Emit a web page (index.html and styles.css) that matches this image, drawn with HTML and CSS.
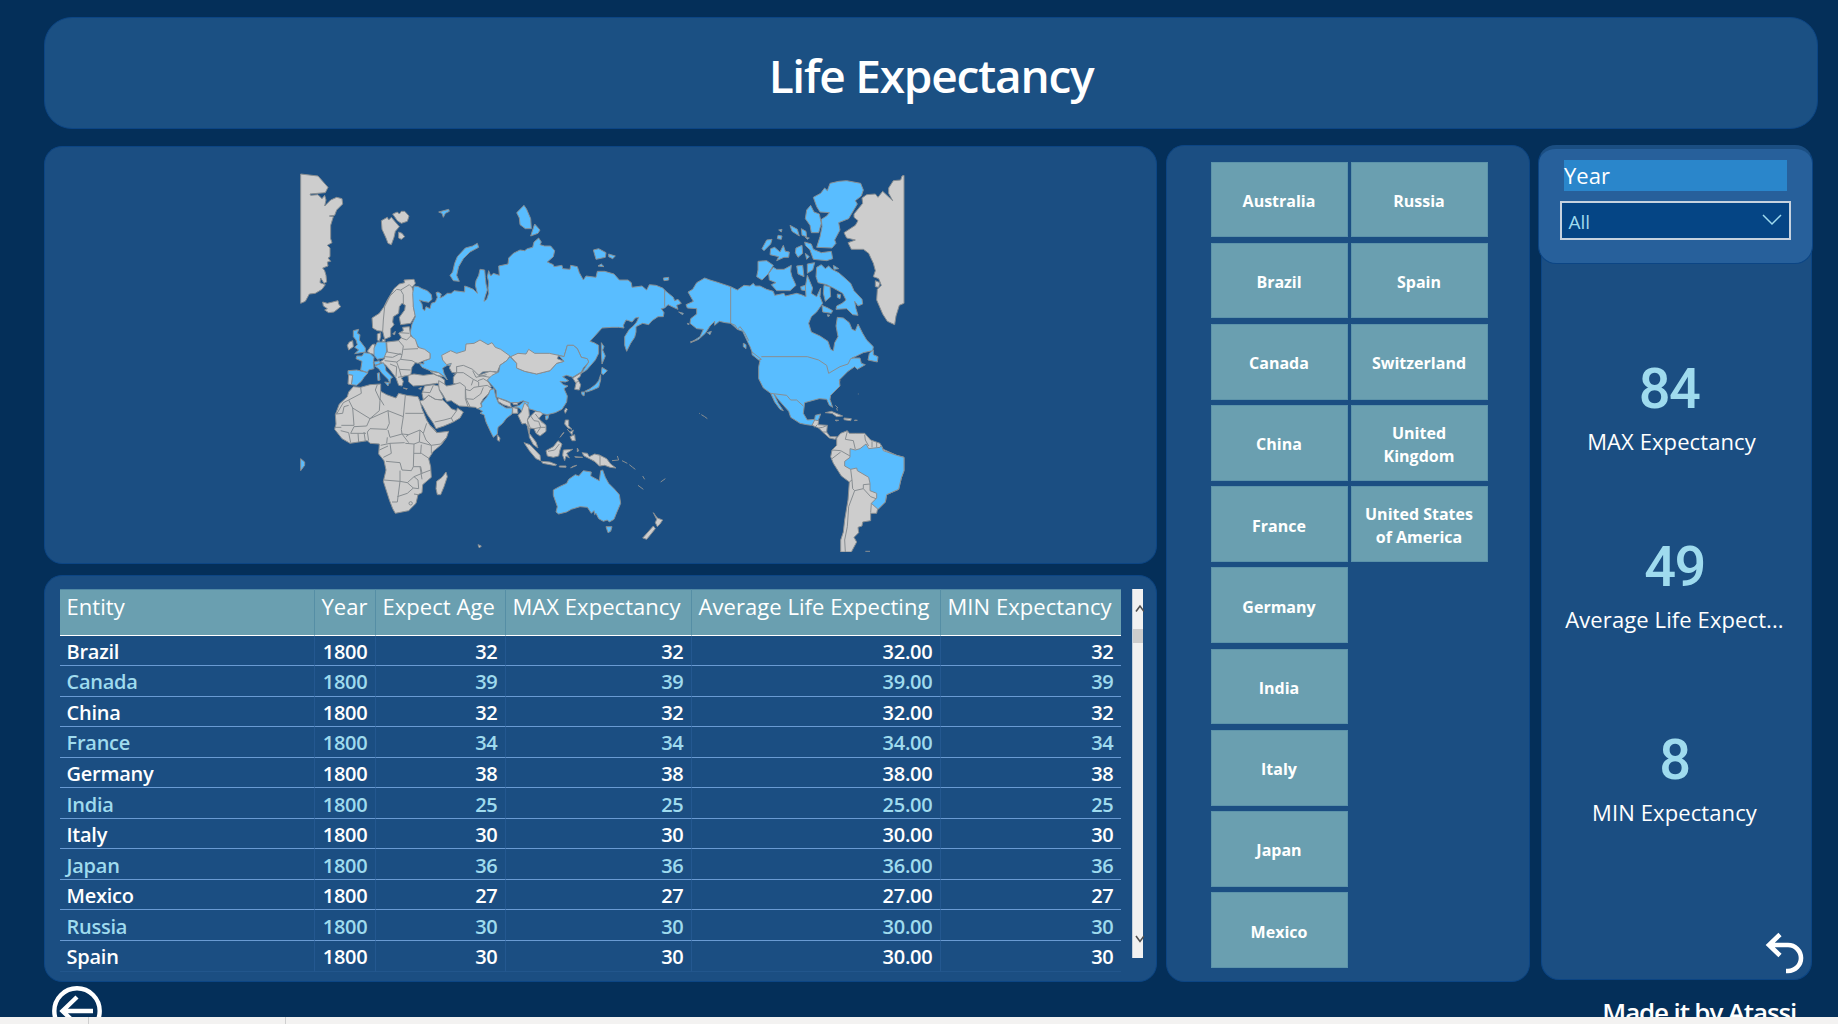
FILE: index.html
```html
<!DOCTYPE html>
<html lang="en">
<head>
<meta charset="utf-8">
<title>Life Expectancy</title>
<link rel="stylesheet" href="styles.css">
</head>
<body>
<div class="dashboard">
  <header class="panel title-panel"><h1>Life Expectancy</h1></header>
  <main class="content">
    <div class="left">
      <section class="panel map-panel">
        <svg class="map" viewBox="0 0 1920 1176" width="640" height="392">
          <!-- Northern Eurasia, Greenland (east) and Scandinavia -->
          <g>
            <path d="M32,42L84,48 114,82 106,98 60,102 62,106 84,104 96,116 104,106 108,120 104,138 122,120 140,112 156,116 158,132 140,150 134,166 118,168 130,170 122,196 122,236 126,248 112,256 120,264 120,290 114,294 122,304 112,306 114,318 98,324 104,332 108,346 110,366 102,370 92,354 90,368 106,374 96,388 76,400 58,402 46,424 32,430Z"/>
            <path d="M98,426L112,430 128,426 144,422 146,432 152,440 132,456 116,458 104,450 112,446 100,438Z"/>
            <path d="M274,182L292,172 296,180 304,172 328,200 316,214 312,232 304,254 294,250 288,234 276,208ZM308,162L322,156 328,162 334,154 344,154 357,168 352,184 334,190 322,182ZM326,216L336,220 344,230 334,238 326,234Z"/>
            <path d="M246,474L268,460 282,440 292,420 312,386 328,372 344,368 342,360 372,358 376,370 366,382 372,400 370,440 376,466 362,490 332,494 328,472 344,450 346,436 336,430 328,440 326,460 310,470 308,486 312,494 302,506 302,530 284,538 278,514 262,512 248,504Z"/>
            <path class="line" d="M278,514L280,480 284,440 300,408 320,388 332,390 358,374 366,382M332,390L340,404 340,432"/>
            <path d="M178,546L188,542 190,560 176,570 172,556ZM262,522L272,518 272,530 268,544 262,540ZM278,538L286,540 282,546 276,544ZM308,522L316,514 314,524Z"/>
            <path class="hit" d="M372,378L385,380 396,386 412,392 424,404 426,418 416,427 400,424 388,420 396,432 398,447 404,452 408,440 420,446 424,430 436,426 442,412 438,398 444,396 454,402 450,414 462,408 472,400 484,400 492,392 508,394 524,396 524,378 536,382 550,388 562,400 556,376 558,362 566,346 570,328 584,330 586,352 588,372 592,390 586,408 582,424 590,418 596,400 594,384 596,366 592,350 596,332 602,348 610,340 628,346 626,318 654,312 656,294 670,280 690,270 704,272 712,266 728,262 732,246 746,234 754,246 750,254 764,258 782,258 794,272 790,290 772,306 790,314 792,320 816,316 818,326 840,328 842,316 862,320 868,338 880,360 888,348 918,352 922,334 944,334 972,342 988,360 1014,360 1024,368 1026,382 1056,378 1070,390 1078,374 1098,376 1118,384 1128,394 1150,412 1154,422 1164,418 1174,430 1160,436 1164,448 1150,442 1134,434 1124,444 1114,446 1122,458 1120,470 1104,470 1086,482 1076,494 1058,490 1038,500 1038,516 1034,532 1022,550 1010,574 1004,556 1004,530 1018,508 1030,498 1040,486 1046,472 1036,474 1026,486 1016,482 1008,480 1000,496 1002,504 986,502 966,502 936,504 920,522 900,544 912,548 926,556 926,580 916,600 890,630 874,640 896,606 890,596 874,592 862,566 850,556 832,556 822,590 806,586 734,590 662,590 600,600 520,620 472,616 458,624 462,640 472,660 456,644 440,636 420,632 396,622 388,610 402,612 400,604 420,596 420,580 390,568 372,540 360,520 366,492 376,470 370,440 368,400Z"/>
            <path class="hit" d="M446,156L476,148 478,154 466,160 460,172 456,160ZM702,136L710,148 722,176 724,206 706,206 690,194 688,174 680,158ZM734,192L750,210 744,220 722,228ZM480,346L488,336 494,310 502,290 526,264 548,258 562,250 566,262 540,276 520,296 506,320 500,346 508,364 490,362ZM910,270L926,266 948,278 946,292 918,298ZM924,318L934,312 942,320ZM956,282L976,288 968,296 956,290ZM1120,354L1136,352 1136,360 1122,362ZM1166,456L1180,460 1178,464Z"/>
            <path class="hit" d="M190,512L206,508 202,520 210,524 208,540 226,564 226,576 194,581 206,570 194,562 202,554 198,540 190,530Z"/>
            <path d="M290,546L326,542 334,532 326,520 340,512 338,502 358,500 362,528 376,538 384,562 404,568 420,580 420,596 402,602 384,610 376,608 366,622 362,646 344,648 334,654 340,664 336,678 326,676 318,654 300,630 286,614 270,606 284,596 282,580 292,576Z"/>
            <path class="line" d="M328,518L358,520M334,534L350,540 362,528M326,542L340,558 336,584 292,576M340,568L384,566M336,584L332,598 366,602 376,608M284,590L308,592 332,580M284,602L320,606 332,598M320,606L328,628 362,630M300,612L320,620 318,650M328,628L334,650M344,648L324,652"/>
          </g>
          <!-- Africa, Middle East, South and East Asia -->
          <g transform="translate(0 540)">
            <path class="hit" d="M32,356L44,366 44,376 32,392Z"/>
            <path class="hit" d="M174,92L200,90 234,98 222,112 214,124 200,136 184,134 188,106 174,104ZM200,48L216,48 222,38 240,40 252,52 250,68 252,86 236,90 232,98 212,90 216,64 198,56Z"/>
            <path d="M176,104L188,106 184,134 174,132ZM232,34L246,14 254,12 254,44 240,40Z"/>
            <path class="hit" d="M262,6L288,6 290,34 282,54 262,58 252,46 252,24ZM252,66L268,62 272,70 256,76ZM254,78L280,68 286,80 288,92 308,112 302,116 300,130 294,118 276,100 266,86ZM262,100L268,98 270,120 264,122ZM284,126L298,128 294,138Z"/>
            <path d="M354,106L372,102 400,106 430,102 450,110 464,120 464,132 440,130 400,136 370,138 356,126ZM420,94L446,98 462,110 440,106ZM386,146L394,142 392,148ZM340,144L352,146 350,148Z"/>
            <path d="M455,46L482,32 500,40 526,32 528,12 552,10 570,0 594,14 606,8 616,22 632,28 660,48 650,62 630,76 622,96 600,94 578,96 566,106 548,92 520,80 500,80 500,98 486,98 478,84 484,70 470,74 458,60Z"/>
            <path d="M500,80L520,76 548,88 566,106 600,94 624,98 606,112 594,124 604,140 592,146 570,150 540,160 520,140 490,130 490,112 500,98Z"/>
            <path class="line" d="M500,98L520,98 550,118 544,136M548,92L558,112 590,104M566,106L600,112M564,122L580,116 596,126M500,98L490,104M550,118L566,126 566,144"/>
            <path d="M446,122L460,130 470,138 490,134 510,128 526,140 528,176 540,200 508,198 492,188 484,182 470,184 456,160 446,146ZM526,148L540,152 552,142 592,136 606,146 596,160 580,176 572,190 576,204 562,206 556,202 534,200 526,176Z"/>
            <path class="line" d="M528,176L550,178 572,162 580,142"/>
            <path d="M404,138L430,134 446,138 448,150 460,172 456,180 436,178 416,166 400,180 396,160ZM400,180L416,166 436,178 458,180 472,192 484,206 500,212 502,204 520,216 510,234 490,246 462,258 438,266 430,250 412,224 398,198 388,184Z"/>
            <path class="line" d="M396,156L420,158 430,136M434,246L462,240 484,234 500,212M484,234L490,246"/>
            <path class="hit" d="M660,50L650,62 630,76 626,96 606,106 592,120 604,134 618,150 620,172 650,182 662,188 684,188 700,182 712,190 716,206 736,212 752,220 772,224 796,218 816,208 830,186 832,168 822,146 834,138 820,134 810,124 826,126 836,122 818,110 830,106 848,112 874,96 880,84 896,66 892,56 874,52 862,26 850,16 832,16 822,50 806,46 822,64 800,70 780,92 740,102 704,94 680,84 680,70ZM766,228L776,226 774,236 768,240Z"/>
            <path d="M662,50L684,40 708,42 716,28 734,40 778,40 806,46 802,56 822,64 800,70 780,92 740,102 704,94 680,84 680,70Z"/>
            <path class="hit" d="M600,150L612,146 618,172 626,190 648,204 664,204 688,196 702,184 716,188 706,206 696,214 688,204 668,202 666,222 650,234 638,250 624,262 622,282 610,292 600,272 588,246 582,224 570,220 578,214 564,206 576,200 574,190 588,174 596,162Z"/>
            <path d="M624,174L660,188 664,202 640,194 624,184ZM668,188L684,188 682,194 670,194ZM668,202L682,206 684,220 668,220ZM704,188L716,202 718,226 712,240 720,262 716,280 712,258 706,250 696,252 684,226 694,216ZM712,240L722,228 736,214 752,216 758,222 746,236 768,256 768,274 750,288 738,280 732,266 720,264 718,280 738,306 744,324 730,314 718,292 716,268ZM622,284L630,294 628,304 622,300Z"/>
            <path class="line" d="M722,228L732,242 746,244 752,262 732,266M736,222L758,250M740,280L752,262 766,262"/>
            <path d="M702,308L720,314 750,346 752,362 738,356 718,332ZM754,364L780,366 800,374 796,377 758,370ZM808,378L828,378 828,382 808,381ZM842,384L860,376 846,380ZM768,332L790,320 804,302 816,312 810,330 806,348 790,352 772,348ZM820,330L848,328 830,340 838,354 828,348 824,362 818,346ZM862,324L866,332 862,336ZM854,350L878,352 858,352ZM826,240L836,240 836,258 846,268 834,264 824,252ZM840,290L854,284 856,302 846,302ZM810,292L820,278 822,278ZM832,268L840,276 850,270 846,284ZM828,204L832,208 826,220 823,212Z"/>
            <path d="M898,352L912,344 930,346 930,376 916,366 904,358Z"/>
            <path class="line" d="M774,334L794,330 808,312"/>
            <path d="M848,114L874,98 870,110 862,116 872,134 868,150 854,148 858,130Z"/>
            <path class="line" d="M856,128L866,124"/>
            <path class="hit" d="M936,82L952,92 940,104 934,100ZM932,104L932,120 926,142 908,150 890,156 884,154 900,146 916,134 926,122ZM874,156L884,156 882,168 876,164Z"/>
            <path d="M190,140L212,142 240,134 272,132 272,154 290,164 318,174 326,160 350,166 384,170 390,184 396,206 410,240 420,256 436,270 440,278 476,274 470,292 454,314 430,334 416,356 422,380 424,412 398,434 396,458 384,464 378,490 356,512 316,520 308,506 298,480 280,424 288,390 282,362 266,342 268,312 240,310 232,302 180,310 156,296 134,268 138,252 136,224 148,192 172,170 176,156Z"/>
            <path class="line" d="M212,142L214,160 176,180 160,188 140,222M176,180L188,204 240,236 268,212 270,180 256,150 262,134M188,204L192,256 154,256M138,222L158,220 162,200 176,196M240,236L294,212 340,230 346,166M270,176L282,196M272,154L270,180M346,220L400,220M240,236L230,258 192,260 182,280M294,212L298,250 290,268 240,266 232,276 236,302M340,230L334,268 336,282 300,292 294,270M336,282L356,284 390,270 400,280 410,250M336,282L356,308M356,284L348,290M344,308L300,310 272,316M390,270L388,306 372,312 346,310M388,306L424,316 452,312 470,292M400,280L408,300 424,316 424,340M300,310L304,340 280,352M372,312L370,380 364,392 336,390 330,368 288,364M372,340L394,340 418,356M394,314L392,340M370,380L392,380 396,400 422,390M390,380L396,418M282,420L330,424 330,392M330,424L322,486 306,486M330,424L352,428 372,410 396,400M322,470L352,460 370,444 386,446 384,420 372,410M352,428L370,444M384,464L372,462M152,272L176,278 182,308M204,280L206,306M222,276L226,304M182,280L228,280M134,262L154,262M292,292L290,310M440,278L420,256M268,330L294,318"/>
            <circle class="line" cx="362" cy="490" r="5"/>
            <path d="M440,424L456,412 468,396 472,410 462,440 452,464 442,464 438,446ZM564,614L574,618 568,624Z"/>
          </g>
          <!-- North America and Greenland (west) -->
          <g transform="translate(930 0)">
            <path class="hit" d="M314,354L330,360 350,366 392,380 412,390 432,376 450,378 460,370 466,378 480,378 500,388 520,394 524,406 552,400 556,408 590,400 604,404 618,410 616,380 622,346 632,370 638,384 634,400 650,410 662,384 660,410 668,430 650,456 634,470 626,490 634,516 660,528 684,544 692,568 700,572 704,548 714,530 708,498 712,472 730,474 748,488 756,508 766,512 774,492 788,520 800,540 820,560 818,572 790,578 770,588 756,594 780,594 784,610 796,614 772,628 764,620 744,634 730,648 718,660 720,678 692,706 690,718 698,742 688,736 680,718 658,716 636,722 614,728 610,760 622,780 644,778 646,766 662,762 656,778 644,790 634,796 620,794 600,790 572,772 566,754 550,736 536,720 522,702 534,728 550,752 540,748 524,726 512,700 490,684 476,656 476,620 480,602 468,592 456,576 450,560 444,548 428,514 412,508 392,490 376,488 358,484 344,496 344,484 330,498 316,520 296,538 272,548 300,530 310,508 290,506 270,490 272,476 290,462 290,446 262,444 258,434 280,424 264,396 278,388 290,368Z"/>
            <path class="line" d="M194,390V440M392,380V490L406,496 412,508 420,500 434,518 446,542M484,590H622L656,600 680,616 686,640 720,620 744,612 752,596 764,592M512,700L560,706 572,720 590,720 610,738M718,670L720,660"/>
            <path class="hit" d="M804,600L808,580 820,570 820,584 834,590 832,606ZM430,550L438,554 438,566 430,560ZM456,576L484,598 476,600 456,584ZM262,490L268,492 264,494ZM322,518L334,514 330,524Z"/>
            <path class="hit" d="M640,112L662,100 674,84 682,92 690,70 716,64 740,62 782,70 790,90 784,108 766,122 772,132 746,176 716,188 720,210 704,240 708,250 696,264 650,262 660,230 666,200 664,178 680,168 688,158 660,156 650,140ZM632,136L642,156 658,162 664,190 656,218 634,218 630,196 616,176 620,150ZM614,246L634,252 640,268 664,278 694,274 698,296 680,302 640,298 630,270 616,256ZM486,266L500,240 516,238 512,252 492,272ZM512,266L524,262 540,276 550,256 556,274 568,276 566,292 552,292 530,302 536,290 510,284ZM570,196L592,208 598,228 576,214ZM604,206L618,214 620,230 606,226ZM588,264L606,256 608,280 594,292 586,278ZM534,226L546,228 544,238 532,236ZM536,210L546,208 544,216ZM616,280L628,290 620,298ZM616,232L628,234 622,238Z"/>
            <path class="hit" d="M474,304L500,302 520,316 506,340 486,360 470,350 474,330ZM506,340L520,322 530,328 552,328 574,316 572,334 576,350 588,376 570,392 530,392 514,374 528,368 508,360ZM590,318L608,316 612,350 594,342ZM622,312L644,308 638,330 622,340ZM602,380L616,376 616,392 604,390ZM650,322L664,314 676,326 686,318 696,328 716,338 732,352 752,370 762,392 786,418 788,432 774,438 764,424 768,446 774,466 758,464 740,446 708,448 710,438 726,430 738,420 728,400 700,384 680,374 654,368 648,350ZM700,316L716,326 702,328ZM666,436L684,444 698,452 694,460 668,456ZM672,376L690,380 692,410 676,424 670,400ZM712,402L722,404 720,416 712,412ZM682,464L690,466 684,470Z"/>
            <path d="M912,46L906,48 902,60 880,62 866,84 866,100 878,122 848,94 834,112 826,102 800,104 786,114 788,130 762,162 762,172 774,182 766,196 732,218 740,234 766,240 744,248 754,268 790,268 806,280 820,310 826,332 820,350 836,356 844,376 832,388 830,420 848,462 862,484 884,494 888,468 898,436 912,430ZM826,362L840,368 836,382 826,380Z"/>
          </g>
          <!-- Oceania and the southern Americas -->
          <g transform="translate(630 540)">
            <path class="hit" d="M304,8L312,20 308,30 316,48 306,72 304,40Z"/>
            <path d="M246,338L262,340 268,350 284,342 300,346 320,356 332,372 348,384 330,382 314,376 298,378 284,364 268,356 252,348Z"/>
            <path class="line" d="M300,346V376M336,362L356,360 352,348M366,362L382,370M388,374L398,382 406,388M428,408L434,418M414,436L430,448M482,426L496,416M598,220L600,221M604,224L614,230 622,236M570,6L586,1M1006,196L1014,204M1010,204L1012,212M1075,161V163M1096,634H1110"/>
            <path class="hit" d="M160,450L178,440 200,430 206,418 226,404 236,408 250,392 274,396 272,408 298,422 302,392 308,390 316,412 326,430 344,448 358,464 362,490 350,518 342,538 328,546 322,540 310,544 296,536 288,520 284,524 282,512 274,520 262,502 240,500 214,508 200,516 176,522 168,516 172,500 160,466ZM318,560L336,560 332,574 324,578Z"/>
            <path d="M460,518L472,534 488,540 480,552 472,560 466,548 470,538ZM460,558L466,566 450,586 440,598 428,594 444,576Z"/>
            <path d="M936,256L944,240 956,242 954,254 982,256 980,276 990,290 1010,290 1006,298 988,294 968,276 956,264ZM976,218L994,214 1028,228 1010,230 996,220ZM1032,234L1054,236 1052,242 1032,239ZM1006,240L1016,241 1008,243ZM1064,240L1072,241 1064,242Z"/>
            <path class="line" d="M952,254L944,262M956,264L968,262 982,256M968,276L980,276"/>
            <path d="M1010,294L1022,280 1042,272 1048,280 1066,280 1094,280 1112,300 1140,310 1150,328 1190,346 1212,352 1212,392 1204,414 1196,448 1160,464 1156,486 1132,510 1130,520 1112,520 1112,542 1088,546 1086,558 1074,562 1076,578 1062,592 1070,606 1054,636H1022V600L1030,576 1034,540 1044,480 1048,426 1024,408 1000,370 992,350 996,330 1010,316Z"/>
            <path class="hit" d="M1050,326L1066,330 1080,326 1098,312 1106,326 1140,322 1144,316 1150,332 1190,346 1212,352 1212,392 1204,414 1196,448 1160,464 1156,486 1134,508 1114,490 1130,474 1130,460 1110,452 1110,430 1106,412 1072,392 1070,384 1052,388 1034,378 1034,364 1050,352Z"/>
            <path class="line" d="M1042,274L1036,298 1060,302 1066,328M1094,284L1096,300 1106,318M1116,304V322M1130,306V322M996,330L1022,332 1050,348M1022,336L996,356M1052,388L1056,420 1058,446 1064,452 1046,500 1042,560 1034,600 1036,636M1048,426L1056,420M1064,452L1090,446 1090,434 1110,432M1090,446L1112,470 1128,476M1114,490L1112,518"/>
          </g>
        </svg>
      </section>
      <section class="panel table-panel">
        <table class="data">
          <colgroup><col class="c-entity"><col class="c-year"><col class="c-age"><col class="c-max"><col class="c-avg"><col class="c-min"></colgroup>
          <thead><tr><th>Entity</th><th>Year</th><th>Expect Age</th><th>MAX Expectancy</th><th>Average Life Expecting</th><th>MIN Expectancy</th></tr></thead>
          <tbody>
            <tr><td>Brazil</td><td>1800</td><td>32</td><td>32</td><td>32.00</td><td>32</td></tr>
            <tr><td>Canada</td><td>1800</td><td>39</td><td>39</td><td>39.00</td><td>39</td></tr>
            <tr><td>China</td><td>1800</td><td>32</td><td>32</td><td>32.00</td><td>32</td></tr>
            <tr><td>France</td><td>1800</td><td>34</td><td>34</td><td>34.00</td><td>34</td></tr>
            <tr><td>Germany</td><td>1800</td><td>38</td><td>38</td><td>38.00</td><td>38</td></tr>
            <tr><td>India</td><td>1800</td><td>25</td><td>25</td><td>25.00</td><td>25</td></tr>
            <tr><td>Italy</td><td>1800</td><td>30</td><td>30</td><td>30.00</td><td>30</td></tr>
            <tr><td>Japan</td><td>1800</td><td>36</td><td>36</td><td>36.00</td><td>36</td></tr>
            <tr><td>Mexico</td><td>1800</td><td>27</td><td>27</td><td>27.00</td><td>27</td></tr>
            <tr><td>Russia</td><td>1800</td><td>30</td><td>30</td><td>30.00</td><td>30</td></tr>
            <tr><td>Spain</td><td>1800</td><td>30</td><td>30</td><td>30.00</td><td>30</td></tr>
          </tbody>
        </table>
        <div class="scrollbar">
          <svg width="11" height="40" viewBox="0 0 11 40"><path d="M3 22.5L7 17L11 22.5"/></svg>
          <div class="thumb"></div>
          <svg class="down" width="11" height="40" viewBox="0 0 11 40"><path d="M3 18L7 23.5L11 18"/></svg>
        </div>
      </section>
    </div>
    <section class="panel slicer-panel">
      <div class="tiles">
        <button>Australia</button><button>Brazil</button><button>Canada</button><button>China</button><button>France</button><button>Germany</button><button>India</button><button>Italy</button><button>Japan</button><button>Mexico</button>
        <button>Russia</button><button>Spain</button><button>Switzerland</button><button>United<br>Kingdom</button><button>United States<br>of America</button>
      </div>
    </section>
    <aside class="side">
      <div class="panel year-panel">
        <div class="year-label">Year</div>
        <div class="select"><span>All</span><svg width="20" height="12" viewBox="0 0 20 12"><path d="M1 1L10 10L19 1"/></svg></div>
      </div>
      <div class="panel kpi-panel">
        <div class="kpi kpi-max"><div class="value">84</div><div class="label">MAX Expectancy</div></div>
        <div class="kpi kpi-avg"><div class="value">49</div><div class="label">Average Life Expect...</div></div>
        <div class="kpi kpi-min"><div class="value">8</div><div class="label">MIN Expectancy</div></div>
        <svg class="undo" width="40" height="44" viewBox="0 0 40 44"><path d="M15 2.5L4 13L15 23.5M4.5 13H23A13 13 0 0 1 23 39H21"/></svg>
      </div>
    </aside>
  </main>
  <footer class="foot">
    <svg width="50" height="50" viewBox="0 0 50 50"><circle cx="25" cy="25" r="22.7"/><path d="M25 11L10.5 25L25 39M11 25H41"/></svg>
    <span>Made it by Atassi</span>
  </footer>
</div>
<div class="tabstrip"><i></i><i></i></div>
</body>
</html>
```
FILE: styles.css
```css
* { box-sizing: border-box; }
body {
  margin: 0;
  width: 1838px;
  height: 1024px;
  overflow: hidden;
  display: flex;
  flex-direction: column;
  background: #042f59;
  color: #fff;
  font-family: "Open Sans", "Noto Sans", sans-serif;
}
.dashboard { height: 1017px; padding: 17px 20px 0 44px; overflow: hidden; }
.panel { background: #1b4e82; border: 1.5px solid #0c4584; border-radius: 18px; }
.title-panel {
  height: 112px;
  border-radius: 28px;
  background: #1b5083;
  display: flex;
  justify-content: center;
  padding-top: 24px;
}
h1 { margin: 0; font-size: 46px; line-height: 66px; font-weight: 600; letter-spacing: -1.25px; }
.content { display: flex; margin-top: 16px; }
.left { width: 1113px; padding-top: 1px; display: flex; flex-direction: column; gap: 11px; }
.map-panel { height: 418px; padding: 12.5px 0 0 244.5px; }
.map { display: block; }
.map path { fill: #cdcdcd; stroke: #888e92; stroke-width: 3; stroke-linejoin: round; }
.map .hit { fill: #59bdff; }
.map .line { fill: none; stroke: #888e92; stroke-width: 3; }

.table-panel { height: 407px; padding: 12.5px 0 0 14.5px; display: flex; gap: 11px; }
.data { width: 1061px; table-layout: fixed; border-collapse: separate; border-spacing: 0; height: 0; }
.c-entity { width: 255px; }
.c-year { width: 61px; }
.c-age { width: 130px; }
.c-max { width: 186px; }
.c-avg { width: 249px; }
.c-min { width: 180px; }
.data th {
  height: 47px;
  padding: 3px 7px 0;
  background: #6a9fb0;
  border-top: 1px solid #5088a4;
  border-bottom: 1.5px solid #fff;
  border-right: 1px solid #558ea5;
  font-size: 22px;
  line-height: 26px;
  font-weight: 400;
  letter-spacing: .05px;
  text-align: left;
  vertical-align: top;
  white-space: nowrap;
}
.data td {
  height: 30.55px;
  padding: 2px 7px 0;
  border-bottom: 1.5px solid #6a9bd3;
  border-right: 1px solid #245890;
  font-size: 20px;
  line-height: 27px;
  font-weight: 600;
  letter-spacing: -.25px;
  text-align: right;
}
.data td:first-child { text-align: left; }
.data th:last-child, .data td:last-child { border-right: 0; }
.data tr:nth-child(even) td { color: #9fdbee; }
.data tbody tr:last-child td { border-bottom-color: #22568c; }

.scrollbar { width: 11px; height: 369px; background: #f1f1f1; border-left: 1px solid #c4d0dc; display: flex; flex-direction: column; }
.scrollbar path { fill: none; stroke: #505050; stroke-width: 1.6; }
.thumb { height: 14px; background: #cdcdcd; }
.scrollbar .down { margin-top: auto; }

.slicer-panel { width: 364px; height: 837px; margin-left: 9px; padding: 15.5px 0 0 43.5px; }
.tiles {
  display: grid;
  grid-auto-flow: column;
  grid-template-rows: repeat(10, 75.7px);
  grid-template-columns: 137px 137px;
  gap: 5.5px 3px;
}
.tiles button {
  padding: 4px 0 0;
  border: 1px solid #5c93aa;
  background: #6a9fb0;
  color: #fff;
  font: 700 16px/23px "Open Sans", sans-serif;
  letter-spacing: 0;
}

.side { width: 275px; margin-left: 8px; }
.year-panel {
  position: relative;
  z-index: 1;
  height: 119px;
  padding: 12.5px 20.5px 0;
  background: #27609b;
  border-top: 4px solid #1b4e82;
}
.year-label { height: 31px; margin: -2px 5px 0 4.5px; background: #2a86cb; font-size: 22px; line-height: 31px; }
.select {
  height: 39px;
  margin: 10px 1px 0 0;
  padding: 0 7px;
  border: 2px solid #c6d2df;
  background: #054585;
  color: #9fdbee;
  font-size: 19px;
  display: flex;
  align-items: center;
  justify-content: space-between;
}
.select span { padding-top: 3px; }
.select path { fill: none; stroke: #9fdbee; stroke-width: 1.5; }
.kpi-panel {
  height: 732px;
  margin: -16px 1px 0 3px;
  border-top: 0;
  border-radius: 0 0 18px 18px;
  display: flex;
  flex-direction: column;
}
.kpi { text-align: center; height: 100px; width: 271px; margin-left: -3px; }
.kpi-max { margin: 111px 0 0 -6px; }
.kpi-avg { margin-top: 78px; }
.kpi-min { margin-top: 93px; }
.value { font: 500 56px/60px Roboto, sans-serif; color: #9fdbee; letter-spacing: -1.5px; }
.kpi-max .value { padding-right: 5px; }
.label { font-size: 22px; line-height: 30px; margin-top: 7px; letter-spacing: .1px; }
.undo { margin: auto 6px 3px auto; }
.undo path { fill: none; stroke: #fff; stroke-width: 4.6; }

.foot { display: flex; justify-content: space-between; padding: 4px 22px 0 8px; height: 40px; }
.foot svg { flex: none; }
.foot circle, .foot path { fill: none; stroke: #fff; stroke-width: 4.4; }
.foot span { font-size: 26px; line-height: 34px; font-weight: 600; padding-top: 9px; letter-spacing: -1.15px; }
.tabstrip { height: 7px; background: #f3f2f1; display: flex; }
.tabstrip i { width: 89px; border-right: 1px solid #cfcfcf; }
.tabstrip i + i { width: 197px; }
```
